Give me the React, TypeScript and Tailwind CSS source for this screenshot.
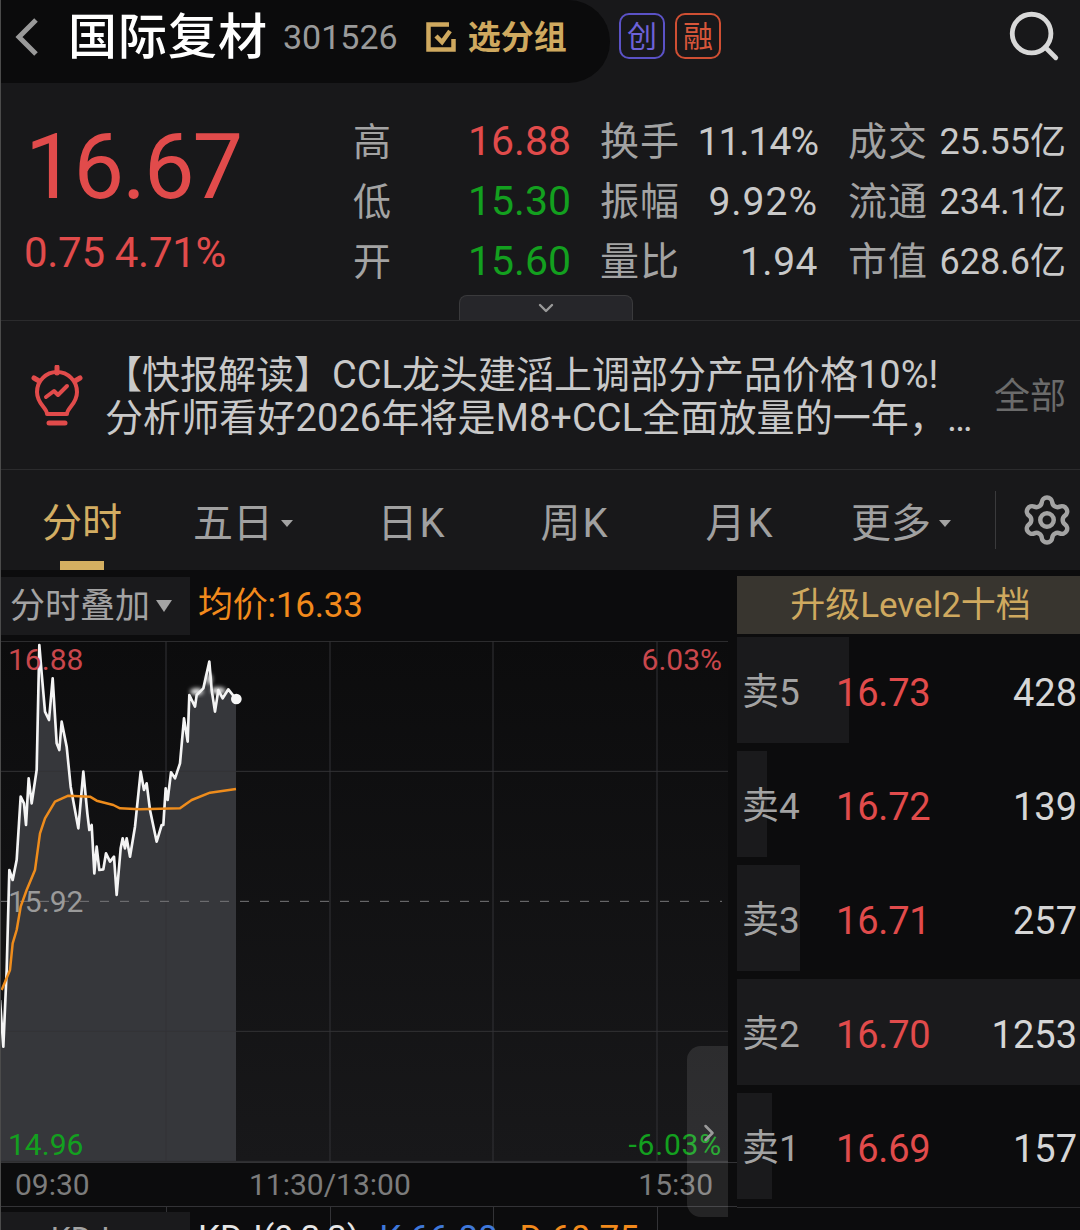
import { ChevronDown, ChevronRight, Search, Settings } from "lucide-react";

const font = { fontFamily: '"Roboto","Noto Sans CJK SC",sans-serif' };

const whitePts =
  "0,1080 10,1220 20,990 28,690 38,720 50,660 62,470 72,490 78,555 86,415 95,490 110,390 118,15 125,100 135,215 147,240 158,115 170,310 178,330 185,245 200,320 212,440 235,565 250,395 262,520 268,570 275,555 283,700 290,620 298,690 310,688 318,640 330,665 342,650 350,765 362,625 368,595 375,625 380,595 390,650 405,560 422,395 432,450 440,430 450,510 470,605 485,555 490,555 497,445 503,480 513,397 525,415 540,370 552,235 563,305 568,165 585,200 590,165 610,145 628,65 635,150 645,215 655,150 668,175 685,148 708,177";
const orangePts =
  "5,1050 30,990 38,910 50,870 62,800 80,750 105,690 120,580 135,535 165,485 205,467 270,470 290,482 340,495 360,505 420,508 540,505 575,480 630,458 708,447";

function Tri({ className }: { className: string }) {
  return <span className={"inline-block border-x-transparent border-t-[#a3a3a3] " + className} />;
}

function StatRow({ a, b, c, d, dc, e, f, color }: { a: string; b: string; c: string; d: string; dc: string; e: string; f: string; color: string }) {
  return (
    <div className="flex h-[60px] items-center">
      <span className="w-[38px] text-[38px] text-[#a3a3a3]">{a}</span>
      <span className={"w-[180px] text-right text-[41px] " + color}>{b}</span>
      <span className="ml-[29px] w-[80px] whitespace-nowrap text-[39px] leading-none tracking-[1px] text-[#a3a3a3]">{c}</span>
      <span className={"w-[138px] text-right text-[39px] text-[#c9c9c9] " + dc}>{d}</span>
      <span className="ml-[30px] w-[80px] whitespace-nowrap text-[39px] leading-none tracking-[1px] text-[#a3a3a3]">{e}</span>
      <span className="w-[138px] whitespace-nowrap text-right text-[36px] text-[#c9c9c9]">{f}</span>
    </div>
  );
}

function Tab({ label, w, active, tri, k }: { label: string; w: string; active?: boolean; tri?: boolean; k?: boolean }) {
  return (
    <div className={"relative flex h-full items-center justify-center pt-[7px] " + w}>
      <span className={"text-[40px] leading-none " + (k ? "tracking-[2px] " : "") + (active ? "text-[#d2ad63]" : "text-[#a0a0a0]")}>{label}</span>
      {tri && <Tri className="ml-[8px] border-x-[6px] border-t-[7px]" />}
      {active && <span className="absolute bottom-0 left-[60px] h-[9px] w-[44px] bg-[#d4af61]" />}
    </div>
  );
}

function Ask({ n, price, vol, bar }: { n: number; price: string; vol: string; bar: number }) {
  return (
    <div className="relative mb-[8px] flex h-[106px] items-center pr-[3px] pt-[6px]">
      <div className="absolute inset-y-0 left-0 bg-[#1a1a1c]" style={{ width: bar }} />
      <span className="relative ml-[5px] w-[94px] text-[37px] text-[#a3a3a3]">卖{n}</span>
      <span className="relative text-[38px] tracking-[-0.2px] text-[#e14b4b]">{price}</span>
      <span className="relative ml-auto text-[38px] text-[#d6d6d6]">{vol}</span>
    </div>
  );
}

export default function App() {
  return (
    <div className="relative h-[1230px] w-[1080px] overflow-hidden bg-[#18181a]" style={font}>
      <div className="absolute inset-y-0 left-0 z-20 w-px bg-[#4b4b4b]" />

      {/* header */}
      <div className="flex h-[83px] items-center">
        <div className="flex h-full w-[610px] items-center rounded-r-[42px] bg-[#0b0b0c] pb-[9px]">
          <svg className="ml-[15px] h-[38px] w-[23px] shrink-0" viewBox="0 0 23 38" fill="none" stroke="#9a9a9a" strokeWidth="5">
            <path d="M21 2L4 19l17 17" />
          </svg>
          <span className="ml-[30px] text-[49px] font-medium leading-none tracking-[1px] text-white">国际复材</span>
          <span className="ml-[15px] text-[34px] text-[#9a9a9a]">301526</span>
          <svg className="ml-[28px] h-[30px] w-[30px] shrink-0" viewBox="0 0 30 30" fill="none" stroke="#cfa95f" strokeWidth="4.5">
            <path d="M23 2.5H2.5V27.5H27.5V17" />
            <path d="M10 14l6 6 8-11" />
          </svg>
          <span className="ml-[12px] text-[33px] font-bold leading-none text-[#cfa95f]">选分组</span>
        </div>
        <span className="mb-[11px] ml-[9px] flex h-[46px] w-[46px] items-center justify-center rounded-[10px] border-2 border-[#5b52c6] text-[30px] text-[#6d62d8]">创</span>
        <span className="mb-[11px] ml-[10px] flex h-[46px] w-[46px] items-center justify-center rounded-[10px] border-2 border-[#cf4f33] text-[30px] text-[#d8563a]">融</span>
        <Search className="mb-[12px] ml-auto mr-[17px] h-[58px] w-[58px] text-[#d8d8d8]" strokeWidth={2} />
      </div>

      {/* quote */}
      <div className="relative flex h-[238px] border-b border-[#2b2b2d]">
        <div className="w-[353px] shrink-0">
          <div className="ml-[25px] mt-[33px] text-[90px] leading-[104px] tracking-[-2px] text-[#e14b4b]">16.67</div>
          <div className="ml-[24px] mt-[11px] text-[42px] leading-[44px] tracking-[-0.3px] text-[#e14b4b]">0.75 4.71%</div>
        </div>
        <div className="pt-[29px]">
          <StatRow a="高" b="16.88" c="换手" d="11.14%" dc="tracking-[-1px]" e="成交" f="25.55亿" color="text-[#e14b4b]" />
          <StatRow a="低" b="15.30" c="振幅" d="9.92%" dc="tracking-[1px]" e="流通" f="234.1亿" color="text-[#13a01f]" />
          <StatRow a="开" b="15.60" c="量比" d="1.94" dc="tracking-[0.5px]" e="市值" f="628.6亿" color="text-[#13a01f]" />
        </div>
        <div className="absolute bottom-0 left-[459px] flex h-[25px] w-[174px] items-center justify-center rounded-t-[8px] border border-b-0 border-[#3a3a3c] bg-[#26262a]">
          <ChevronDown className="h-[24px] w-[24px] text-[#9a9a9a]" strokeWidth={2.4} />
        </div>
      </div>

      {/* news */}
      <div className="flex h-[149px] items-center border-b border-[#2b2b2d] pt-[3px]">
        <svg className="ml-[31px] h-[64px] w-[52px] shrink-0" viewBox="0 0 52 64" fill="none" stroke="#e14b4b" strokeWidth="4" strokeLinecap="round" strokeLinejoin="round">
          <path d="M26 2v6M3 13l5 3M49 13l-5 3" strokeWidth="5" />
          <path d="M16 49c0-6-10-10-10-22a20 20 0 0 1 40 0c0 12-10 16-10 22z" />
          <path d="M18 58h16" strokeWidth="5" />
          <path d="M15 32l8-6 4 4 9-9" />
        </svg>
        <div className="ml-[22px] w-[882px] whitespace-nowrap text-[38px] leading-[43px] text-[#c9c9c9]">
          <div className="-ml-[1px]">【快报解读】CCL龙头建滔上调部分产品价格10%!</div>
          <div className="tracking-[0.1px]">分析师看好2026年将是M8+CCL全面放量的一年，…</div>
        </div>
        <span className="ml-[7px] whitespace-nowrap text-[36px] text-[#6b6b6b]">全部</span>
      </div>

      {/* tabs */}
      <div className="relative flex h-[100px] items-center">
        <Tab label="分时" w="w-[164px]" active />
        <Tab label="五日" w="w-[158px]" tri />
        <Tab label="日K" w="w-[180px]" k />
        <Tab label="周K" w="w-[146px]" k />
        <Tab label="月K" w="w-[184px]" k />
        <Tab label="更多" w="w-[138px]" tri />
        <div className="ml-[25px] h-[58px] w-px bg-[#3a3a3c]" />
        <Settings className="ml-[24px] h-[54px] w-[54px] text-[#a3a3a3]" strokeWidth={2} />
      </div>

      {/* body */}
      <div className="flex h-[660px] bg-[#0c0c0d]">
        <div className="relative w-[737px] shrink-0">
          <div className="flex h-[71px] items-start pt-[7px]">
            <div className="flex h-[58px] w-[190px] items-center bg-[#1a1a1c] pl-[10px]">
              <span className="text-[35px] leading-none text-[#a3a3a3]">分时叠加</span>
              <Tri className="ml-[6px] border-x-[8px] border-t-[12px]" />
            </div>
            <span className="ml-[8px] mt-[7px] text-[35px] leading-[44px] tracking-[-0.2px] text-[#f28a1c]">均价:16.33</span>
          </div>

          {/* chart */}
          <div className="relative h-[521px] w-[728px] bg-gradient-to-b from-[#0c0c0d] to-[#18181a]">
            <svg className="absolute inset-0 h-full w-full" viewBox="0 3 2184 1563" preserveAspectRatio="none">
              <defs>
                <filter id="b"><feGaussianBlur stdDeviation="6" /></filter>
              </defs>
              <polygon points={"0,1563 " + whitePts + " 708,1563"} fill="#36373b" />
              <g stroke="#333336" strokeWidth="3">
                <path d="M0 4H2184M0 394H2184M0 1174H2184M0 1564H2184" />
                <path d="M498 4V1564M990 4V1564M1479 4V1564M1971 4V1564" />
              </g>
              <path d="M0 784H2166" stroke="#77777a" strokeWidth="3" strokeDasharray="27 33" />
              <polyline points={whitePts} fill="none" stroke="#f4f4f4" strokeWidth="8" strokeLinejoin="round" />
              <polyline points={orangePts} fill="none" stroke="#ee8c1c" strokeWidth="7.5" strokeLinejoin="round" />
              <g fill="#efefef" filter="url(#b)">
                <ellipse cx="590" cy="155" rx="20" ry="10" />
                <ellipse cx="628" cy="118" rx="8" ry="16" />
                <ellipse cx="655" cy="152" rx="22" ry="10" />
              </g>
              <circle cx="709" cy="177" r="16" fill="#f6f6f6" />
            </svg>
            <span className="absolute left-[8px] top-0 text-[30px] leading-[38px] text-[#c9474c]">16.88</span>
            <span className="absolute right-[6px] top-0 text-[30px] leading-[38px] text-[#c9474c]">6.03%</span>
            <span className="absolute left-[8px] top-[242px] text-[30px] leading-[38px] text-[#9a9a9a]">15.92</span>
            <span className="absolute bottom-[-2px] left-[8px] text-[30px] leading-[38px] text-[#13a01f]">14.96</span>
            <span className="absolute bottom-[-2px] right-[6px] text-[30px] leading-[38px] tracking-[0.8px] text-[#13a01f]">-6.03%</span>
          </div>

          {/* time axis */}
          <div className="relative h-[44px] border-t border-[#333336] bg-[#0c0c0d] text-[30px] leading-[44px] text-[#7c7c7c]">
            <span className="absolute left-[15px] top-0">09:30</span>
            <span className="absolute left-[249px] top-0">11:30/13:00</span>
            <span className="absolute right-[24px] top-0">15:30</span>
          </div>

          <div className="h-[6px] border-t border-[#333336]" />
          <div className="relative flex h-[18px] items-start">
            <span className="absolute left-[330px] top-[-6px] h-[24px] w-px bg-[#333336]" />
            <span className="absolute left-[493px] top-[-6px] h-[24px] w-px bg-[#333336]" />
            <span className="absolute left-[657px] top-[-6px] h-[24px] w-px bg-[#333336]" />
            <span className="absolute left-[166px] top-[-6px] h-[6px] w-px bg-[#333336]" />
            <div className="relative flex h-[40px] w-[190px] justify-center bg-[#1a1a1c] pr-[30px] pt-[6px] text-[32px] leading-[40px] text-[#a3a3a3]">KDJ</div>
            <span className="relative ml-[8px] mt-[7px] whitespace-nowrap text-[35px] leading-[40px] text-[#e6e6e6]">KDJ(9,3,3)</span>
            <span className="relative ml-[20px] mt-[7px] whitespace-nowrap text-[35px] leading-[40px] text-[#3f78d9]">K:66.88</span>
            <span className="relative ml-[22px] mt-[7px] whitespace-nowrap text-[35px] leading-[40px] text-[#f28a1c]">D:60.75</span>
          </div>

          {/* handle */}
          <div className="absolute left-[687px] top-[476px] flex h-[171px] w-[41px] items-center justify-center rounded-l-[14px] bg-white/10">
            <ChevronRight className="ml-[2px] mt-[3px] h-[28px] w-[28px] text-[#9a9a9a]" strokeWidth={2.2} />
          </div>
        </div>

        <div className="min-w-0 flex-1">
          <div className="mt-[6px] flex h-[58px] items-center justify-center bg-[#38352f] pl-[4px] text-[35px] leading-none text-[#cfa95f]">升级Level2十档</div>
          <div className="pt-[3px]">
            <Ask n={5} price="16.73" vol="428" bar={112} />
            <Ask n={4} price="16.72" vol="139" bar={30} />
            <Ask n={3} price="16.71" vol="257" bar={63} />
            <Ask n={2} price="16.70" vol="1253" bar={343} />
            <Ask n={1} price="16.69" vol="157" bar={35} />
          </div>
          <div className="border-t border-[#2b2b2d]" />
        </div>
      </div>
    </div>
  );
}
